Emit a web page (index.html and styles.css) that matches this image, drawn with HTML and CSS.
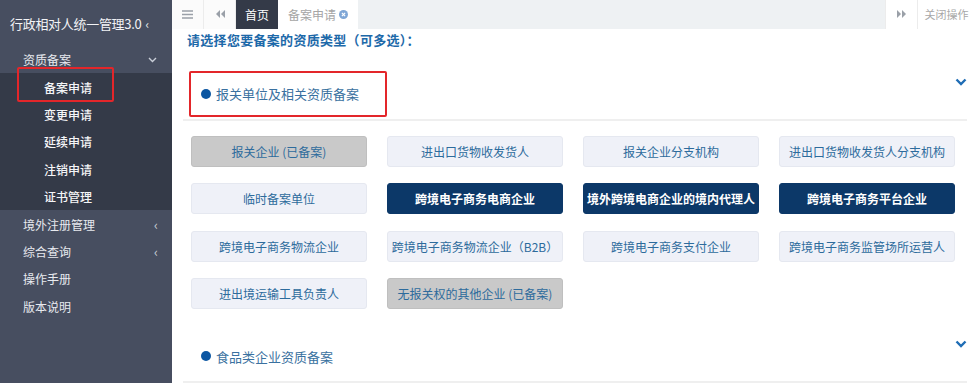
FILE: index.html
```html
<!DOCTYPE html>
<html lang="zh-CN">
<head>
  <meta charset="UTF-8">
  <title>备案申请</title>
  <link rel="stylesheet" href="styles.css">
</head>
<body>
  <aside class="sidebar">
    <div class="brand">行政相对人统一管理3.0<span class="brand-arrow">‹</span></div>
    <ul class="menu">
      <li class="menu-item open">
        <div class="menu-link">资质备案
          <svg class="caret" width="9" height="6" viewBox="0 0 9 6"><path d="M1 1l3.5 3.5L8 1" fill="none" stroke="#c9ced8" stroke-width="1.4"/></svg>
        </div>
        <ul class="submenu">
          <li class="sub-item marked">备案申请</li>
          <li class="sub-item">变更申请</li>
          <li class="sub-item">延续申请</li>
          <li class="sub-item">注销申请</li>
          <li class="sub-item">证书管理</li>
        </ul>
      </li>
      <li class="menu-item"><div class="menu-link">境外注册管理<span class="side-arrow">‹</span></div></li>
      <li class="menu-item"><div class="menu-link">综合查询<span class="side-arrow">‹</span></div></li>
      <li class="menu-item"><div class="menu-link">操作手册</div></li>
      <li class="menu-item"><div class="menu-link">版本说明</div></li>
    </ul>
  </aside>

  <main class="main">
    <nav class="tabbar">
      <div class="tab-btn">
        <svg width="11" height="9" viewBox="0 0 11 9"><path d="M0 1h11M0 4.5h11M0 8h11" stroke="#9aa0a8" stroke-width="1.3"/></svg>
      </div>
      <div class="tab-btn">
        <svg width="10" height="8" viewBox="0 0 10 8"><path d="M5 0v8L1 4zM10 0v8L6 4z" fill="#9aa0a8"/></svg>
      </div>
      <div class="tab active">首页</div>
      <div class="tab">备案申请
        <svg class="tab-close" width="9" height="9" viewBox="0 0 10 10"><circle cx="5" cy="5" r="5" fill="#7fa6d6"/><path d="M3.2 3.2l3.6 3.6M6.8 3.2L3.2 6.8" stroke="#fff" stroke-width="1.3"/></svg>
      </div>
      <div class="tab-fill"></div>
      <div class="tab-btn right">
        <svg width="10" height="8" viewBox="0 0 10 8"><path d="M0 0v8l4-4zM5 0v8l4-4z" fill="#9aa0a8"/></svg>
      </div>
      <div class="tab-close-all">关闭操作</div>
    </nav>

    <div class="content">
      <h2 class="page-title">请选择您要备案的资质类型（可多选）：</h2>

      <section class="group">
        <div class="group-head">
          <div class="group-title marked"><span class="dot"></span>报关单位及相关资质备案</div>
          <svg class="chevron" width="12" height="8" viewBox="0 0 12 8"><path d="M1.5 1.5L6 6l4.5-4.5" fill="none" stroke="#1f6db5" stroke-width="2.4"/></svg>
        </div>
        <div class="choices">
          <div class="choice done">报关企业 (已备案)</div>
          <div class="choice">进出口货物收发货人</div>
          <div class="choice">报关企业分支机构</div>
          <div class="choice">进出口货物收发货人分支机构</div>
          <div class="choice">临时备案单位</div>
          <div class="choice picked">跨境电子商务电商企业</div>
          <div class="choice picked">境外跨境电商企业的境内代理人</div>
          <div class="choice picked">跨境电子商务平台企业</div>
          <div class="choice">跨境电子商务物流企业</div>
          <div class="choice">跨境电子商务物流企业（B2B）</div>
          <div class="choice">跨境电子商务支付企业</div>
          <div class="choice">跨境电子商务监管场所运营人</div>
          <div class="choice">进出境运输工具负责人</div>
          <div class="choice done">无报关权的其他企业 (已备案)</div>
        </div>
      </section>

      <section class="group">
        <div class="group-head">
          <div class="group-title"><span class="dot"></span>食品类企业资质备案</div>
          <svg class="chevron" width="12" height="8" viewBox="0 0 12 8"><path d="M1.5 1.5L6 6l4.5-4.5" fill="none" stroke="#1f6db5" stroke-width="2.4"/></svg>
        </div>
      </section>
    </div>
  </main>
</body>
</html>
```

FILE: styles.css
```css
body {
  margin: 0;
  display: flex;
  height: 383px;
  overflow: hidden;
  font-family: "Noto Sans CJK SC", "Noto Sans", sans-serif;
  font-size: 12px;
  background: #fff;
}
ul {
  list-style: none;
  margin: 0;
  padding: 0;
}

/* sidebar */
.sidebar {
  width: 172px;
  flex-shrink: 0;
  background: #474e60;
  color: #e8eaef;
}
.brand {
  height: 46px;
  display: flex;
  align-items: center;
  padding-left: 10px;
  font-size: 13px;
  color: #f2f3f6;
  letter-spacing: -0.3px;
}
.brand-arrow {
  margin-left: 4px;
  font-size: 12px;
}
.menu-link {
  height: 27.4px;
  display: flex;
  align-items: center;
  padding: 0 14px 0 23px;
  justify-content: space-between;
  font-size: 12px;
}
.caret {
  margin-right: 1px;
}
.side-arrow {
  color: #c9ced8;
  font-size: 13px;
}
.submenu {
  background: #343a48;
}
.sub-item {
  height: 27.4px;
  display: flex;
  align-items: center;
  padding-left: 44px;
  font-weight: 500;
  color: #f4f5f7;
  position: relative;
}
.sub-item.marked::after {
  content: "";
  position: absolute;
  left: 17px;
  top: -6px;
  width: 93px;
  height: 31px;
  border: 2px solid #e3262a;
  border-radius: 2px;
}

/* main */
.main {
  flex: 1;
  display: flex;
  flex-direction: column;
  min-width: 0;
}
.tabbar {
  height: 30px;
  display: flex;
  background: #fbfbfb;
  color: #999;
}
.tab-btn {
  width: 31px;
  display: flex;
  align-items: center;
  justify-content: center;
  border-right: 1px solid #ececec;
}
.tab-btn.right {
  background: #fff;
  border-left: 1px solid #ececec;
}
.tab {
  display: flex;
  align-items: center;
  padding: 0 10px;
  background: #fff;
  color: #a5a5a5;
}
.tab.active {
  background: #343a48;
  color: #fff;
  padding: 0 9px;
}
.tab-close {
  margin-left: 3px;
}
.tab-fill {
  flex: 1;
  background: #eef1f3;
}
.tab-close-all {
  width: 57px;
  display: flex;
  align-items: center;
  justify-content: center;
  background: #fff;
  color: #a8a8a8;
  font-size: 11px;
}

.content {
  padding: 0 8px 0 11px;
}
.page-title {
  margin: 0;
  height: 32px;
  padding-left: 4px;
  font-size: 13px;
  letter-spacing: 0.3px;
  line-height: 22px;
  color: #1d69a9;
  font-weight: bold;
}

.group-head {
  height: 58px;
  display: flex;
  justify-content: space-between;
  border-bottom: 2px solid #efefef;
}
.group-title {
  align-self: flex-end;
  margin: 0 0 2px 6px;
  height: 42px;
  padding: 0 26px 0 10px;
  display: flex;
  align-items: center;
  font-size: 13px;
  color: #3a71a0;
  border: 2px solid transparent;
}
.group-title.marked {
  border-color: #e3262a;
  border-radius: 2px;
}
.dot {
  width: 10px;
  height: 10px;
  border-radius: 50%;
  background: #0b56a2;
  margin-right: 5px;
}
.chevron {
  margin: 17px 0 0;
  flex-shrink: 0;
}

.choices {
  display: grid;
  grid-template-columns: repeat(4, 176px);
  column-gap: 20px;
  row-gap: 16.5px;
  padding: 15px 0 14px 8px;
}
.choice {
  height: 29px;
  display: flex;
  align-items: center;
  justify-content: center;
  background: #eff1f8;
  border: 1px solid #e5e8f0;
  border-radius: 3px;
  color: #2d6b9c;
  white-space: nowrap;
}
.choice.done {
  background: #c9c9c9;
  border-color: #bfbfbf;
}
.choice.picked {
  background: #0c3868;
  border-color: #0c3868;
  color: #fff;
  font-weight: bold;
}
```
